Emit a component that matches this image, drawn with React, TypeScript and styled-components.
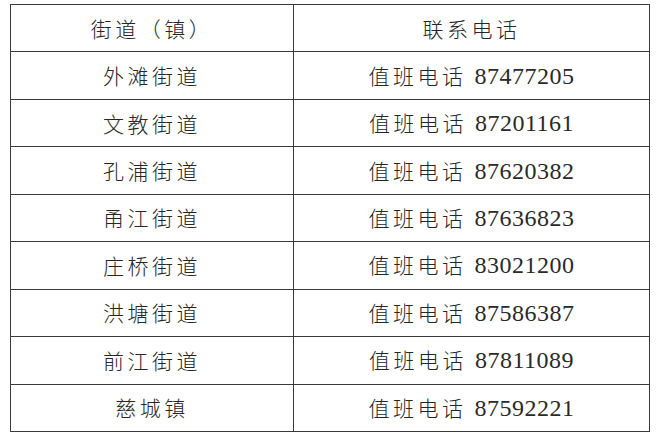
import styled, { createGlobalStyle } from "styled-components";

const rows: [string, string][] = [
  ["外滩街道", "87477205"],
  ["文教街道", "87201161"],
  ["孔浦街道", "87620382"],
  ["甬江街道", "87636823"],
  ["庄桥街道", "83021200"],
  ["洪塘街道", "87586387"],
  ["前江街道", "87811089"],
  ["慈城镇", "87592221"],
];

const GlobalStyle = createGlobalStyle`
  html, body {
    margin: 0;
    padding: 0;
    background: #ffffff;
  }
  body {
    font-family: "Noto Sans CJK SC", "Noto Sans", sans-serif;
    color: #222;
  }
`;

const Page = styled.div`
  padding: 4px 0 0 10px;
`;

const Table = styled.table`
  border-collapse: collapse;
  width: 637px;
  height: 428px;
  table-layout: fixed;
`;

const Row = styled.tr`
  height: 47.4px;
`;

const Cell = styled.td<{ $left?: boolean }>`
  width: ${(p) => (p.$left ? "282px" : "355px")};
  border: 1.5px solid #3a3a3a;
  padding: 0;
  text-align: center;
  vertical-align: middle;
  font-size: 21px;
  font-weight: 300;
  line-height: 1;
  color: #262626;
`;

const Han = styled.span`
  letter-spacing: 3.5px;
`;

const Digits = styled.span`
  margin-left: 8px;
  font-family: "Liberation Serif", "DejaVu Serif", serif;
  font-size: 24px;
  letter-spacing: 0.5px;
  color: #2a2a2a;
`;

export default function App() {
  return (
    <>
      <GlobalStyle />
      <Page>
        <Table>
          <tbody>
            <Row>
              <Cell $left>
                <Han>街道（镇）</Han>
              </Cell>
              <Cell>
                <Han>联系电话</Han>
              </Cell>
            </Row>
            {rows.map(([name, phone]) => (
              <Row key={name}>
                <Cell $left>
                  <Han>{name}</Han>
                </Cell>
                <Cell>
                  <Han>值班电话</Han>
                  <Digits>{phone}</Digits>
                </Cell>
              </Row>
            ))}
          </tbody>
        </Table>
      </Page>
    </>
  );
}
